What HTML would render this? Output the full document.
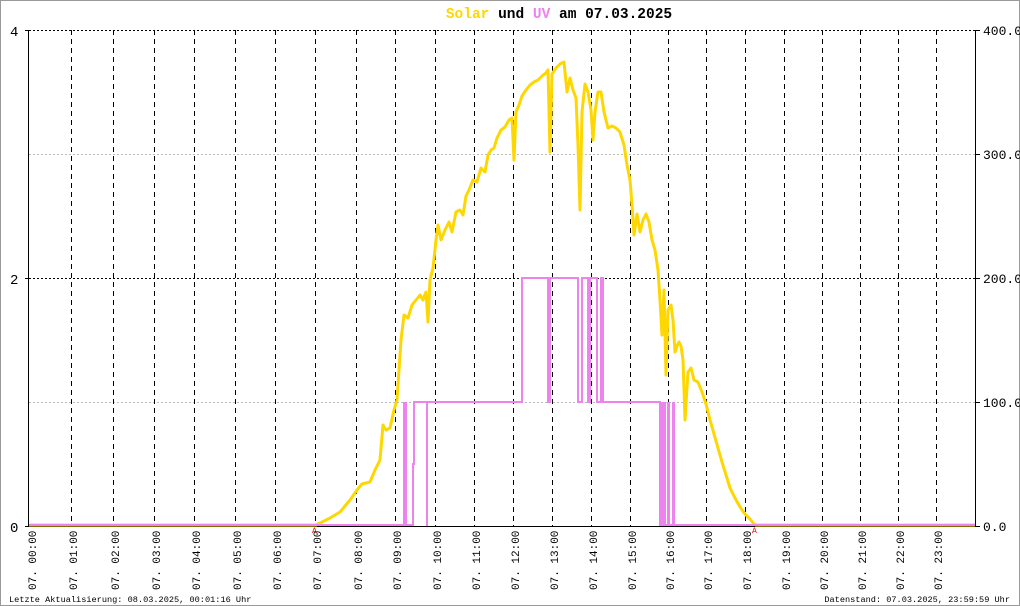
<!DOCTYPE html>
<html><head><meta charset="utf-8"><style>
html,body{margin:0;padding:0;background:#fff}
svg{display:block}
text{font-family:"Liberation Mono","DejaVu Sans Mono",monospace}
</style></head><body>
<svg width="1020" height="606" viewBox="0 0 1020 606" xmlns="http://www.w3.org/2000/svg">
<rect x="0.5" y="0.5" width="1019" height="605" fill="#fff" stroke="#999"/>
<text x="559" y="18" font-size="14.5" text-anchor="middle" font-weight="bold"><tspan fill="#ffd700">Solar</tspan> und <tspan fill="#ee82ee">UV</tspan> am 07.03.2025</text>
<g stroke="#000" stroke-width="1" stroke-dasharray="2,2">
<line x1="29" y1="30.5" x2="975" y2="30.5"/>
<line x1="29" y1="278.5" x2="975" y2="278.5"/>
</g>
<g stroke="#bbb" stroke-width="1" stroke-dasharray="2,2">
<line x1="29" y1="154.5" x2="975" y2="154.5"/>
<line x1="29" y1="402.5" x2="975" y2="402.5"/>
</g>
<g stroke="#000" stroke-width="1" stroke-dasharray="5,4">
<line x1="71.5" y1="30" x2="71.5" y2="526"/><line x1="113.5" y1="30" x2="113.5" y2="526"/>
<line x1="154.5" y1="30" x2="154.5" y2="526"/><line x1="194.5" y1="30" x2="194.5" y2="526"/>
<line x1="235.5" y1="30" x2="235.5" y2="526"/><line x1="275.5" y1="30" x2="275.5" y2="526"/>
<line x1="315.5" y1="30" x2="315.5" y2="526"/><line x1="356.5" y1="30" x2="356.5" y2="526"/>
<line x1="395.5" y1="30" x2="395.5" y2="526"/><line x1="435.5" y1="30" x2="435.5" y2="526"/>
<line x1="474.5" y1="30" x2="474.5" y2="526"/><line x1="513.5" y1="30" x2="513.5" y2="526"/>
<line x1="552.5" y1="30" x2="552.5" y2="526"/><line x1="591.5" y1="30" x2="591.5" y2="526"/>
<line x1="630.5" y1="30" x2="630.5" y2="526"/><line x1="668.5" y1="30" x2="668.5" y2="526"/>
<line x1="706.5" y1="30" x2="706.5" y2="526"/><line x1="745.5" y1="30" x2="745.5" y2="526"/>
<line x1="784.5" y1="30" x2="784.5" y2="526"/><line x1="822.5" y1="30" x2="822.5" y2="526"/>
<line x1="860.5" y1="30" x2="860.5" y2="526"/><line x1="898.5" y1="30" x2="898.5" y2="526"/>
<line x1="936.5" y1="30" x2="936.5" y2="526"/>
</g>
<g stroke="#000" stroke-width="1">
<line x1="28.5" y1="30" x2="28.5" y2="527"/>
<line x1="975.5" y1="30" x2="975.5" y2="527"/>
<line x1="25" y1="30.5" x2="29" y2="30.5"/><line x1="25" y1="278.5" x2="29" y2="278.5"/><line x1="25" y1="526.5" x2="29" y2="526.5"/>
<line x1="975" y1="30.5" x2="980" y2="30.5"/><line x1="975" y1="154.5" x2="980" y2="154.5"/><line x1="975" y1="278.5" x2="980" y2="278.5"/><line x1="975" y1="402.5" x2="980" y2="402.5"/><line x1="975" y1="526.5" x2="980" y2="526.5"/>
<line x1="29" y1="526.5" x2="975" y2="526.5"/>
</g>
<g font-size="14" fill="#000">
<text x="10" y="36">4</text><text x="10" y="284">2</text><text x="10" y="532">0</text>
</g>
<g font-size="13" fill="#000">
<text x="983" y="35">400.0</text><text x="983" y="159">300.0</text><text x="983" y="283">200.0</text><text x="983" y="407">100.0</text><text x="983" y="531">0.0</text>
</g>
<polyline fill="none" stroke="#ffd700" stroke-width="3" stroke-linejoin="round" points="29,525 316,525 330,518 340,512 350,500 357,490 362,484 370,482 375,470 380,460 383,425 386,430 390,428 394,410 397,400 399,370 401,340 404,315 408,318 412,305 416,300 420,295 423,300 426,292 428,322 430,280 433,268 436,240 438,225 441,240 445,230 449,222 452,232 456,212 460,210 463,215 466,196 469,190 473,180 477,182 481,168 485,172 488,155 491,150 494,148 497,138 501,130 505,127 509,120 512,118 514,160 516,112 519,105 522,96 526,90 530,85 534,82 538,80 542,76 546,73 548,70 550,152 552,74 556,68 560,64 564,62 567,92 570,78 573,90 576,98 578,145 580,210 582,112 585,84 588,92 591,110 593,140 595,112 598,92 601,92 604,112 608,128 612,126 616,128 620,132 624,145 627,165 630,180 632,205 634,235 637,214 640,232 643,220 646,214 649,222 652,240 655,250 658,270 660,300 662,335 664,290 666,375 668,310 671,305 673,320 675,352 677,346 679,342 681,346 683,360 685,420 688,372 691,368 694,380 698,382 702,392 706,404 710,420 714,434 718,448 722,462 726,475 730,488 735,498 740,507 745,514 750,519 754,524 756,525 975,525"/>
<g fill="none" stroke="#ee82ee" stroke-width="2">
<polyline points="29,525 413,525 413,464 414,464 414,402 522,402 522,278 548,278 548,402 550,402 550,278 578,278 578,402 582,402 582,278 588,278 588,402 590,402 590,278 597,278 597,402 601,402 601,278 603,278 603,402 660,402 660,525 676,525 975,525"/>
<line x1="427" y1="402" x2="427" y2="526"/>
</g>
<rect x="403" y="402" width="4" height="124" fill="#ee82ee"/>
<rect x="660" y="402" width="6" height="124" fill="#ee82ee"/>
<rect x="667" y="402" width="3" height="124" fill="#ee82ee"/>
<rect x="672" y="402" width="3" height="124" fill="#ee82ee"/>
<text x="312" y="533" font-size="8" fill="#f00">A</text>
<text x="752" y="533" font-size="8" fill="#f00">A</text>
<g font-size="11" fill="#000">
<text transform="translate(36,590) rotate(-90)">07. 00:00</text>
<text transform="translate(77,590) rotate(-90)">07. 01:00</text>
<text transform="translate(119,590) rotate(-90)">07. 02:00</text>
<text transform="translate(160,590) rotate(-90)">07. 03:00</text>
<text transform="translate(200,590) rotate(-90)">07. 04:00</text>
<text transform="translate(241,590) rotate(-90)">07. 05:00</text>
<text transform="translate(281,590) rotate(-90)">07. 06:00</text>
<text transform="translate(321,590) rotate(-90)">07. 07:00</text>
<text transform="translate(362,590) rotate(-90)">07. 08:00</text>
<text transform="translate(401,590) rotate(-90)">07. 09:00</text>
<text transform="translate(441,590) rotate(-90)">07. 10:00</text>
<text transform="translate(480,590) rotate(-90)">07. 11:00</text>
<text transform="translate(519,590) rotate(-90)">07. 12:00</text>
<text transform="translate(558,590) rotate(-90)">07. 13:00</text>
<text transform="translate(597,590) rotate(-90)">07. 14:00</text>
<text transform="translate(636,590) rotate(-90)">07. 15:00</text>
<text transform="translate(674,590) rotate(-90)">07. 16:00</text>
<text transform="translate(712,590) rotate(-90)">07. 17:00</text>
<text transform="translate(751,590) rotate(-90)">07. 18:00</text>
<text transform="translate(790,590) rotate(-90)">07. 19:00</text>
<text transform="translate(828,590) rotate(-90)">07. 20:00</text>
<text transform="translate(866,590) rotate(-90)">07. 21:00</text>
<text transform="translate(904,590) rotate(-90)">07. 22:00</text>
<text transform="translate(942,590) rotate(-90)">07. 23:00</text>
</g>
<text x="9" y="602" font-size="8.6" fill="#000">Letzte Aktualisierung: 08.03.2025, 00:01:16 Uhr</text>
<text x="1010" y="602" font-size="8.6" fill="#000" text-anchor="end">Datenstand: 07.03.2025, 23:59:59 Uhr</text>
</svg>
</body></html>
